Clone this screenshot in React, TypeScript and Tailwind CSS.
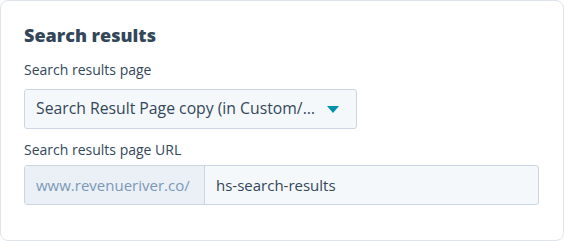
const FONT = { fontFamily: "'Open Sans', Lato, sans-serif" };

function FieldLabel({ children }: { children: string }) {
  return <label className="block text-[14px] leading-5 text-[#33475b]">{children}</label>;
}

export default function App() {
  return (
    <div className="w-[564px] h-[241px] bg-white" style={FONT}>
      <div className="h-full rounded-[8px] border border-[#dfe3eb] px-[23px] pt-[22px]">
        <h2 className="text-[18px] leading-6 font-extrabold text-[#33475b]">Search results</h2>

        <div className="mt-[13px]">
          <FieldLabel>Search results page</FieldLabel>
          <button className="mt-[9px] flex h-[40px] w-[333px] items-center justify-between rounded-[3px] border border-[#cbd6e2] bg-[#f5f8fa] pl-[11px] pr-[17px] text-[15.75px] text-[#33475b]">
            <span className="truncate">Search Result Page copy (in Custom/...</span>
            <svg width="12" height="7" viewBox="0 0 12 7" className="ml-3 shrink-0">
              <path d="M0 0h12L6 7z" fill="#0091ae" />
            </svg>
          </button>
        </div>

        <div className="mt-[11px]">
          <FieldLabel>Search results page URL</FieldLabel>
          <div className="mt-[5px] flex h-[40px] w-[515px] rounded-[3px] border border-[#cbd6e2] bg-[#f5f8fa] text-[15px]">
            <span className="flex w-[180px] items-center border-r border-[#cbd6e2] bg-[#eaf0f6] pl-[11px] text-[#7c98b6]">
              www.revenueriver.co/
            </span>
            <span className="flex items-center pl-[11px] text-[#33475b]">hs-search-results</span>
          </div>
        </div>
      </div>
    </div>
  );
}
